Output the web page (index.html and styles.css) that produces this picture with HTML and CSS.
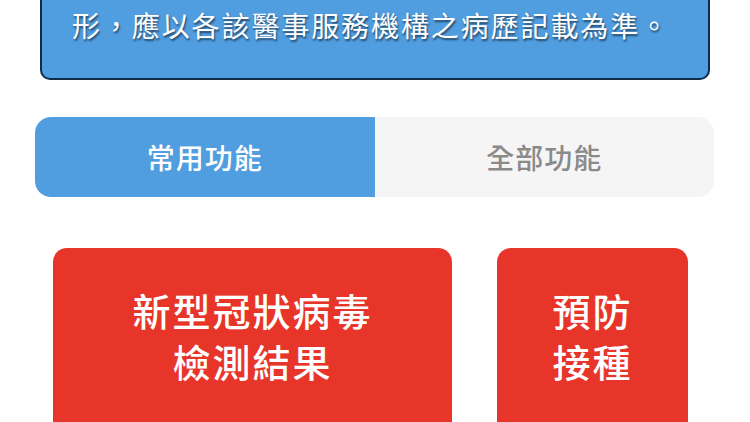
FILE: index.html
```html
<!DOCTYPE html>
<html lang="zh-Hant">

<head>
  <meta charset="UTF-8">
  <meta name="viewport" content="width=device-width, initial-scale=1.0">
  <title>健康存摺</title>
  <link rel="stylesheet" href="styles.css">
</head>

<body>

  <!-- Notice -->
  <div class="notice">
    <p>形，應以各該醫事服務機構之病歷記載為準。</p>
  </div>

  <!-- Tabs -->
  <div class="tabs">
    <button class="tab active">常用功能</button>
    <button class="tab">全部功能</button>
  </div>

  <!-- Shortcut buttons -->
  <div class="shortcuts">
    <button class="shortcut wide">新型冠狀病毒<br>檢測結果</button>
    <button class="shortcut narrow">預防<br>接種</button>
  </div>

</body>

</html>
```

FILE: styles.css
```css
* {
  margin: 0;
  padding: 0;
  box-sizing: border-box;
  font-family: "Noto Sans CJK TC", "Noto Sans", sans-serif;
}

body {
  background-color: #fff;
  width: 750px;
  height: 422px;
  overflow: hidden;
}

.notice {
  margin: -40px 40px 0 40px;
  padding: 45px 0 33px 30px;
  background-color: #509de0;
  border: 2px solid #0f2d4b;
  border-top: none;
  border-radius: 0 0 10px 10px;
}

.notice p {
  color: #fff;
  font-size: 28px;
  line-height: 40px;
  letter-spacing: 1.9px;
  text-shadow: 1px 2px 2px rgba(0, 0, 0, 0.55);
}

.tabs {
  display: flex;
  margin: 37px 36px 0 35px;
  height: 80px;
  border-radius: 16px;
  overflow: hidden;
  background-color: #f5f5f5;
}

.tab {
  flex: 1;
  border: none;
  background: none;
  font-size: 28px;
  font-weight: 500;
  color: #8a8a8a;
  letter-spacing: 1px;
}

.tab.active {
  background-color: #509de0;
  color: #fff;
}

.shortcuts {
  display: flex;
  gap: 45px;
  margin-top: 51px;
  padding-left: 53px;
}

.shortcut {
  height: 230px;
  padding-top: 36px;
  border: none;
  border-radius: 14px;
  background-color: #e8352a;
  color: #fff;
  font-size: 38px;
  font-weight: 500;
  line-height: 51px;
  letter-spacing: 2px;
  align-self: flex-start;
  display: flex;
  align-items: flex-start;
  justify-content: center;
  text-align: center;
}

.shortcut.wide {
  width: 399px;
}

.shortcut.narrow {
  width: 191px;
}
```
